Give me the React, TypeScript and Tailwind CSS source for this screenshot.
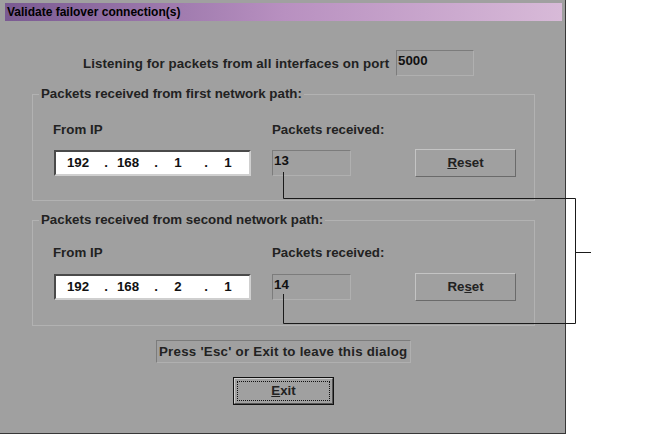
import React from 'react';

const font = { fontFamily: '"Liberation Sans", Arial, sans-serif' };

const Octets: React.FC<{ parts: string[] }> = ({ parts }) => (
  <div className="flex items-center pl-[7px] h-full">
    {parts.map((p, i) => (
      <React.Fragment key={i}>
        <span className="w-[30px] flex justify-center">{p}</span>
        {i < parts.length - 1 && <span className="w-[20px] flex justify-center pl-[6px]">.</span>}
      </React.Fragment>
    ))}
  </div>
);

const Button: React.FC<{ children: React.ReactNode }> = ({ children }) => (
  <div className="w-[101px] h-[28px] flex items-center justify-center border border-t-[#c4c4c4] border-l-[#c4c4c4] border-b-[#6a6a6a] border-r-[#6a6a6a] bg-[#a0a0a0] text-[#222]">
    {children}
  </div>
);

interface PathGroupProps {
  title: string;
  ip: string[];
  count: string;
  reset: React.ReactNode;
  second?: boolean;
}

const PathGroup: React.FC<PathGroupProps> = ({ title, ip, count, reset, second }) => (
  <div className={`ml-[32px] w-[503px] border border-[#b2b2b2] flex flex-col ${second ? 'h-[106px] mt-[19px]' : 'h-[107px] mt-[18px]'}`}>
    <div className="-mt-[9px] h-[16px] leading-[16px] ml-[6px] px-[2px] bg-[#a0a0a0] self-start">{title}</div>
    <div className={`flex h-[16px] leading-[16px] pl-[20px] ${second ? 'mt-[17px]' : 'mt-[20px]'}`}>
      <span className="w-[219px]">From IP</span>
      <span>Packets received:</span>
    </div>
    <div className={`flex items-center h-[28px] pl-[21px] ${second ? 'mt-[12px]' : 'mt-[11px]'}`}>
      <div className="w-[197px] h-[26px] bg-white border-2 border-t-[#4a4a4a] border-l-[#4a4a4a] border-b-[#cfcfcf] border-r-[#cfcfcf] text-[#111]">
        <Octets parts={ip} />
      </div>
      <div className="ml-[21px] w-[79px] h-[26px] border border-t-[#7c7c7c] border-l-[#7c7c7c] border-b-[#b0b0b0] border-r-[#b0b0b0] pl-[1px] pt-[2px] leading-[16px] text-[#111]">
        {count}
      </div>
      <div className="ml-[64px]">
        <Button>{reset}</Button>
      </div>
    </div>
  </div>
);

export default function App() {
  return (
    <div className="relative w-[658px] h-[437px] bg-white" style={font}>
      <div className="w-[566px] h-[434px] bg-[#a0a0a0] border-r border-b border-[#383838] flex flex-col text-[13.3px] font-bold text-[#222]">
        <div className="mt-[3px] ml-[5px] w-[557px] h-[18px] bg-gradient-to-r from-[#7a5a92] via-[#b890c0] to-[#d8bad8] flex items-center pl-[2px] text-[12px] text-black">
          Validate failover connection(s)
        </div>

        <div className="mt-[29px] flex items-center h-[26px] pl-[83px]">
          <span className="w-[313px] leading-[16px] pt-[1px] tracking-[0.1px]">Listening for packets from all interfaces on port</span>
          <div className="w-[78px] h-[26px] border border-t-[#7c7c7c] border-l-[#7c7c7c] border-b-[#b0b0b0] border-r-[#b0b0b0] pl-[1px] pt-[2px] leading-[16px] text-[#111]">
            5000
          </div>
        </div>

        <PathGroup
          title="Packets received from first network path:"
          ip={['192', '168', '1', '1']}
          count="13"
          reset={<span><span className="underline">R</span>eset</span>}
        />
        <PathGroup
          second
          title="Packets received from second network path:"
          ip={['192', '168', '2', '1']}
          count="14"
          reset={<span>Re<span className="underline">s</span>et</span>}
        />

        <div className="mt-[14px] ml-[156px] w-[255px] h-[23px] border border-t-[#7c7c7c] border-l-[#7c7c7c] border-b-[#b0b0b0] border-r-[#b0b0b0] flex items-center pl-[2px] leading-[16px] tracking-[0.25px] whitespace-nowrap">
          Press 'Esc' or Exit to leave this dialog
        </div>

        <div className="mt-[14px] ml-[233px] w-[101px] h-[28px] border border-[#111] bg-[#a0a0a0]">
          <div className="w-full h-full border border-t-[#cfcfcf] border-l-[#cfcfcf] border-b-[#555] border-r-[#555] p-[2px]">
            <div className="w-full h-full border border-dotted border-[#111] flex items-center justify-center">
              <span><span className="underline">E</span>xit</span>
            </div>
          </div>
        </div>
      </div>

      <svg className="absolute left-0 top-0 pointer-events-none" width="658" height="437">
        <path
          d="M283.5 172 V198.5 H575.5 V323.5 H283.5 V294 M575.5 252.5 H591"
          fill="none"
          stroke="#1a1a1a"
          strokeWidth="1"
        />
      </svg>
    </div>
  );
}
